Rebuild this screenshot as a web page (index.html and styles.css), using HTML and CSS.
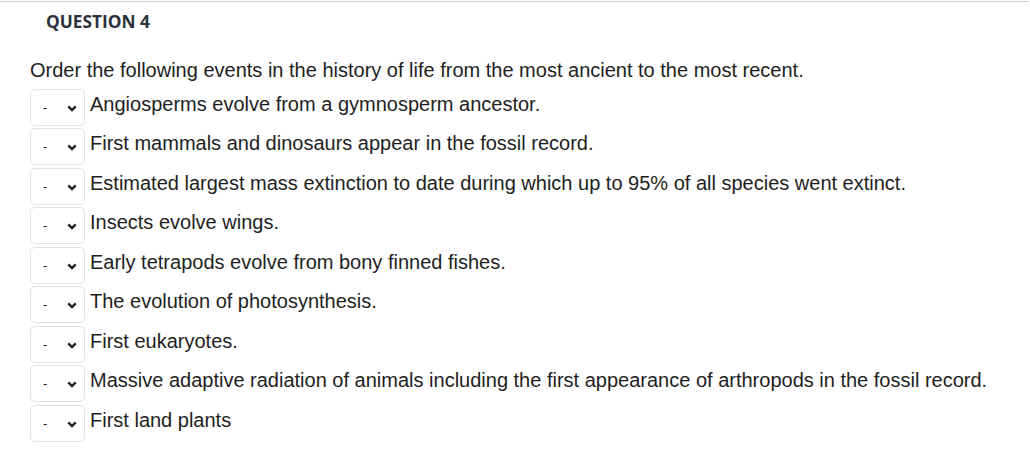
FILE: index.html
```html
<!DOCTYPE html>
<html lang="en">
<head>
    <meta charset="UTF-8">
    <meta name="viewport" content="width=device-width, initial-scale=1.0">
    <title>Question 4</title>
    <link rel="stylesheet" href="styles.css">
</head>
<body>
    <div class="question">
        <h2 class="question-title">QUESTION 4</h2>
        <div class="question-body">
            <p class="prompt">Order the following events in the history of life from the most ancient to the most recent.</p>
            <div id="orderList"></div>
        </div>
    </div>

    <script>
        // Các sự kiện cần sắp xếp
        const events = [
            "Angiosperms evolve from a gymnosperm ancestor.",
            "First mammals and dinosaurs appear in the fossil record.",
            "Estimated largest mass extinction to date during which up to 95% of all species went extinct.",
            "Insects evolve wings.",
            "Early tetrapods evolve from bony finned fishes.",
            "The evolution of photosynthesis.",
            "First eukaryotes.",
            "Massive adaptive radiation of animals including the first appearance of arthropods in the fossil record.",
            "First land plants"
        ];

        const orderList = document.getElementById("orderList");
        events.forEach(text => {
            const row = document.createElement("div");
            row.classList.add("order-row");
            let options = '<option>-</option>';
            for (let i = 1; i <= events.length; i++) options += `<option>${i}</option>`;
            row.innerHTML = `<span class="select-wrap">
                                <select class="order-select">${options}</select>
                                <svg class="chevron" width="10" height="7" viewBox="0 0 10 7"><path d="M1.3 1.3 L5 5 L8.7 1.3" fill="none" stroke="#1e1e1e" stroke-width="2.4"/></svg>
                            </span>
                            <span class="order-text">${text}</span>`;
            orderList.appendChild(row);
        });
    </script>
</body>
</html>
```

FILE: styles.css
```css
body {
    margin: 0;
    background: #fff;
    font-family: Arial, "Liberation Sans", sans-serif;
    color: #1e1e1e;
}
.question {
    border-top: 1px solid #cfcfcf;
    margin-top: 1px;
    margin-right: 1px;
}
.question-title {
    font-family: "Open Sans", sans-serif;
    font-size: 17.3px;
    font-weight: 700;
    color: #2b323c;
    margin: 0;
    padding: 8px 0 0 46px;
    line-height: 24px;
}
.question-body {
    padding: 0 30px;
}
.prompt {
    font-size: 20px;
    margin: 24px 0 7px;
    line-height: 24px;
}
.order-row {
    display: flex;
    align-items: center;
    height: 37px;
    margin-bottom: 2.45px;
}
.select-wrap {
    position: relative;
    display: inline-block;
    width: 55px;
    height: 37px;
    margin-right: 5px;
    flex-shrink: 0;
}
.order-select {
    appearance: none;
    -webkit-appearance: none;
    width: 100%;
    height: 100%;
    box-sizing: border-box;
    border: 1px solid #e3e3e3;
    border-radius: 5px;
    background: #fff;
    font-family: Arial, "Liberation Sans", sans-serif;
    font-size: 13px;
    color: #222;
    padding: 0 0 0 12px;
}
.chevron {
    position: absolute;
    left: 37px;
    top: 16px;
    pointer-events: none;
}
.order-text {
    font-size: 20px;
    line-height: 24px;
    margin-top: -7px;
}
```
